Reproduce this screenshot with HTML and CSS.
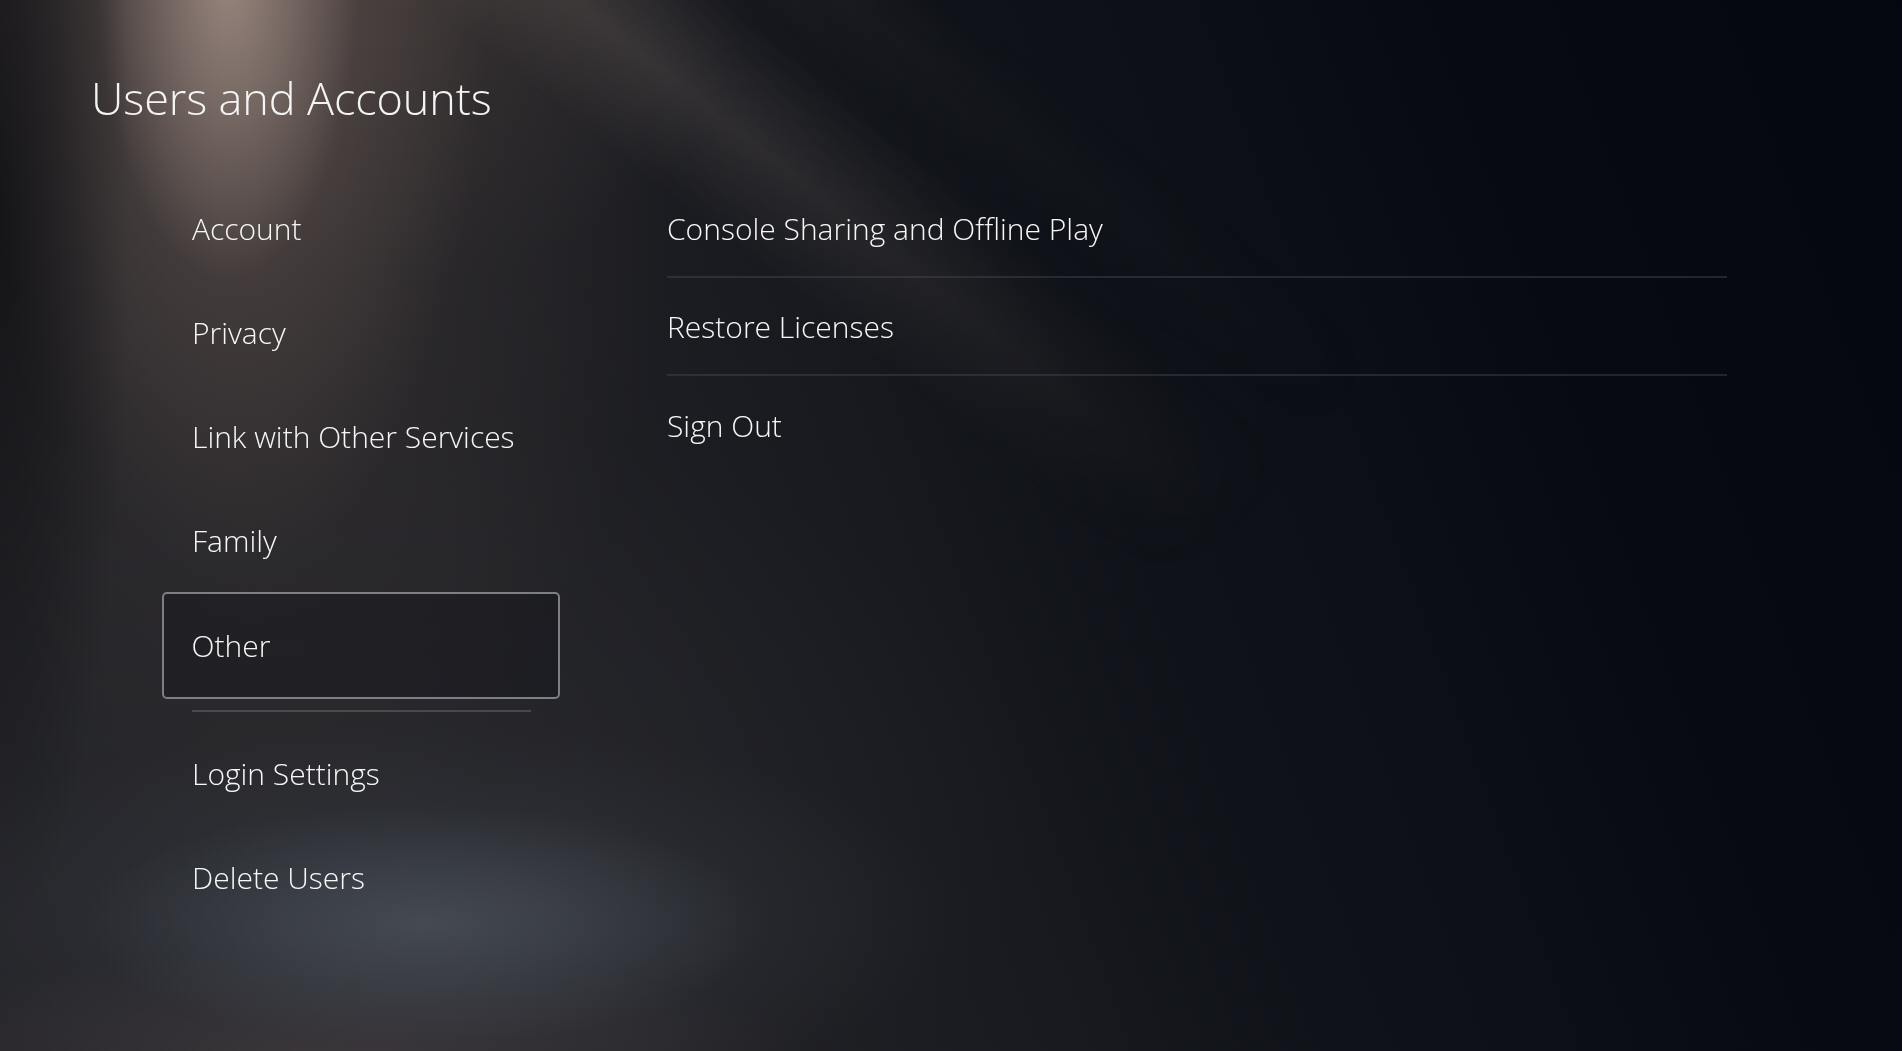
FILE: index.html
```html
<!DOCTYPE html>
<html lang="en">
<head>
<meta charset="utf-8">
<title>Users and Accounts</title>
<link rel="stylesheet" href="styles.css">
</head>
<body>
<div class="light-beam"></div>
<div class="screen">
  <h1 class="title">Users and Accounts</h1>
  <div class="content">
    <nav class="menu">
      <div class="menu-item">Account</div>
      <div class="menu-item">Privacy</div>
      <div class="menu-item">Link with Other Services</div>
      <div class="menu-item">Family</div>
      <div class="menu-item is-selected">Other</div>
      <div class="menu-sep"></div>
      <div class="menu-item">Login Settings</div>
      <div class="menu-item">Delete Users</div>
    </nav>
    <ul class="options">
      <li class="option">Console Sharing and Offline Play</li>
      <li class="option">Restore Licenses</li>
      <li class="option">Sign Out</li>
    </ul>
  </div>
</div>
</body>
</html>
```
FILE: styles.css
```css
html, body {
  margin: 0;
  height: 100%;
}

body {
  overflow: hidden;
  font-family: "Open Sans", "Noto Sans", sans-serif;
  font-weight: 300;
  color: #f7f7f7;
  background-color: #0b0d14;
  background-image:
    radial-gradient(ellipse 130px 720px at 0px 220px, rgba(8, 8, 12, 0.6), rgba(8, 8, 12, 0) 100%),
    radial-gradient(ellipse 130px 300px at 228px -20px, rgba(175, 155, 145, 0.7), rgba(175, 155, 145, 0) 100%),
    radial-gradient(ellipse 255px 620px at 235px -40px, rgba(120, 102, 95, 0.55), rgba(120, 102, 95, 0) 100%),
    radial-gradient(ellipse 330px 300px at 420px -20px, rgba(78, 66, 62, 0.35), rgba(78, 66, 62, 0) 100%),
    radial-gradient(ellipse 430px 900px at 260px 0px, rgba(72, 62, 60, 0.5), rgba(72, 62, 60, 0) 100%),
    radial-gradient(ellipse 340px 120px at 425px 925px, rgba(82, 88, 98, 0.6), rgba(82, 88, 98, 0) 100%),
    radial-gradient(ellipse 540px 190px at 420px 915px, rgba(62, 68, 78, 0.45), rgba(62, 68, 78, 0) 100%),
    radial-gradient(ellipse 480px 110px at 330px 1060px, rgba(66, 58, 62, 0.75), rgba(66, 58, 62, 0) 100%),
    radial-gradient(ellipse 700px 420px at 330px 820px, rgba(44, 46, 52, 0.45), rgba(44, 46, 52, 0) 100%),
    linear-gradient(70deg, #232327 0%, #222226 28%, #1c1d22 40%, #17191f 48%, #0f1218 58%, #0c0f16 69%, #080a12 80%, #05070e 100%);
}

.light-beam {
  position: fixed;
  inset: 0;
  pointer-events: none;
  background-image:
    linear-gradient(38.6deg, rgba(105, 94, 90, 0) 54%, rgba(105, 94, 90, 0.32) 58.7%, rgba(105, 94, 90, 0) 63.5%),
    linear-gradient(38.6deg, rgba(90, 84, 84, 0) 64%, rgba(90, 84, 84, 0.1) 67.3%, rgba(90, 84, 84, 0) 70.5%);
  -webkit-mask-image: radial-gradient(ellipse 950px 760px at 560px 0px, #000 15%, rgba(0, 0, 0, 0) 100%);
  mask-image: radial-gradient(ellipse 950px 760px at 560px 0px, #000 15%, rgba(0, 0, 0, 0) 100%);
}

.screen {
  position: relative;
  padding: 68px 0 0 91px;
}

.title {
  margin: 0;
  font-size: 45px;
  line-height: 60px;
  font-weight: 300;
  letter-spacing: -0.1px;
  color: #f4f4f4;
}

.content {
  display: flex;
  align-items: flex-start;
  margin-top: 48px;
  padding-left: 71px;
}

.menu {
  width: 398px;
  display: flex;
  flex-direction: column;
}

.menu-item {
  box-sizing: border-box;
  height: 104px;
  display: flex;
  align-items: center;
  padding-left: 28px;
  border: 2px solid transparent;
  border-radius: 5px;
  font-size: 30px;
}

.menu-item.is-selected {
  height: 107px;
  border: 2.5px solid #7b7f87;
  background: rgba(16, 16, 22, 0.35);
  padding-left: 27.5px;
}

.menu-sep {
  height: 2px;
  margin: 11px 29px 9px 30px;
  background: rgba(120, 124, 132, 0.4);
}

.options {
  list-style: none;
  margin: 4px 0 0 107px;
  padding: 0;
  width: 1060px;
}

.option {
  box-sizing: border-box;
  height: 98px;
  display: flex;
  align-items: center;
  border-bottom: 2px solid rgba(70, 72, 82, 0.45);
  font-size: 30px;
}

.option:last-child {
  border-bottom: none;
}
```
